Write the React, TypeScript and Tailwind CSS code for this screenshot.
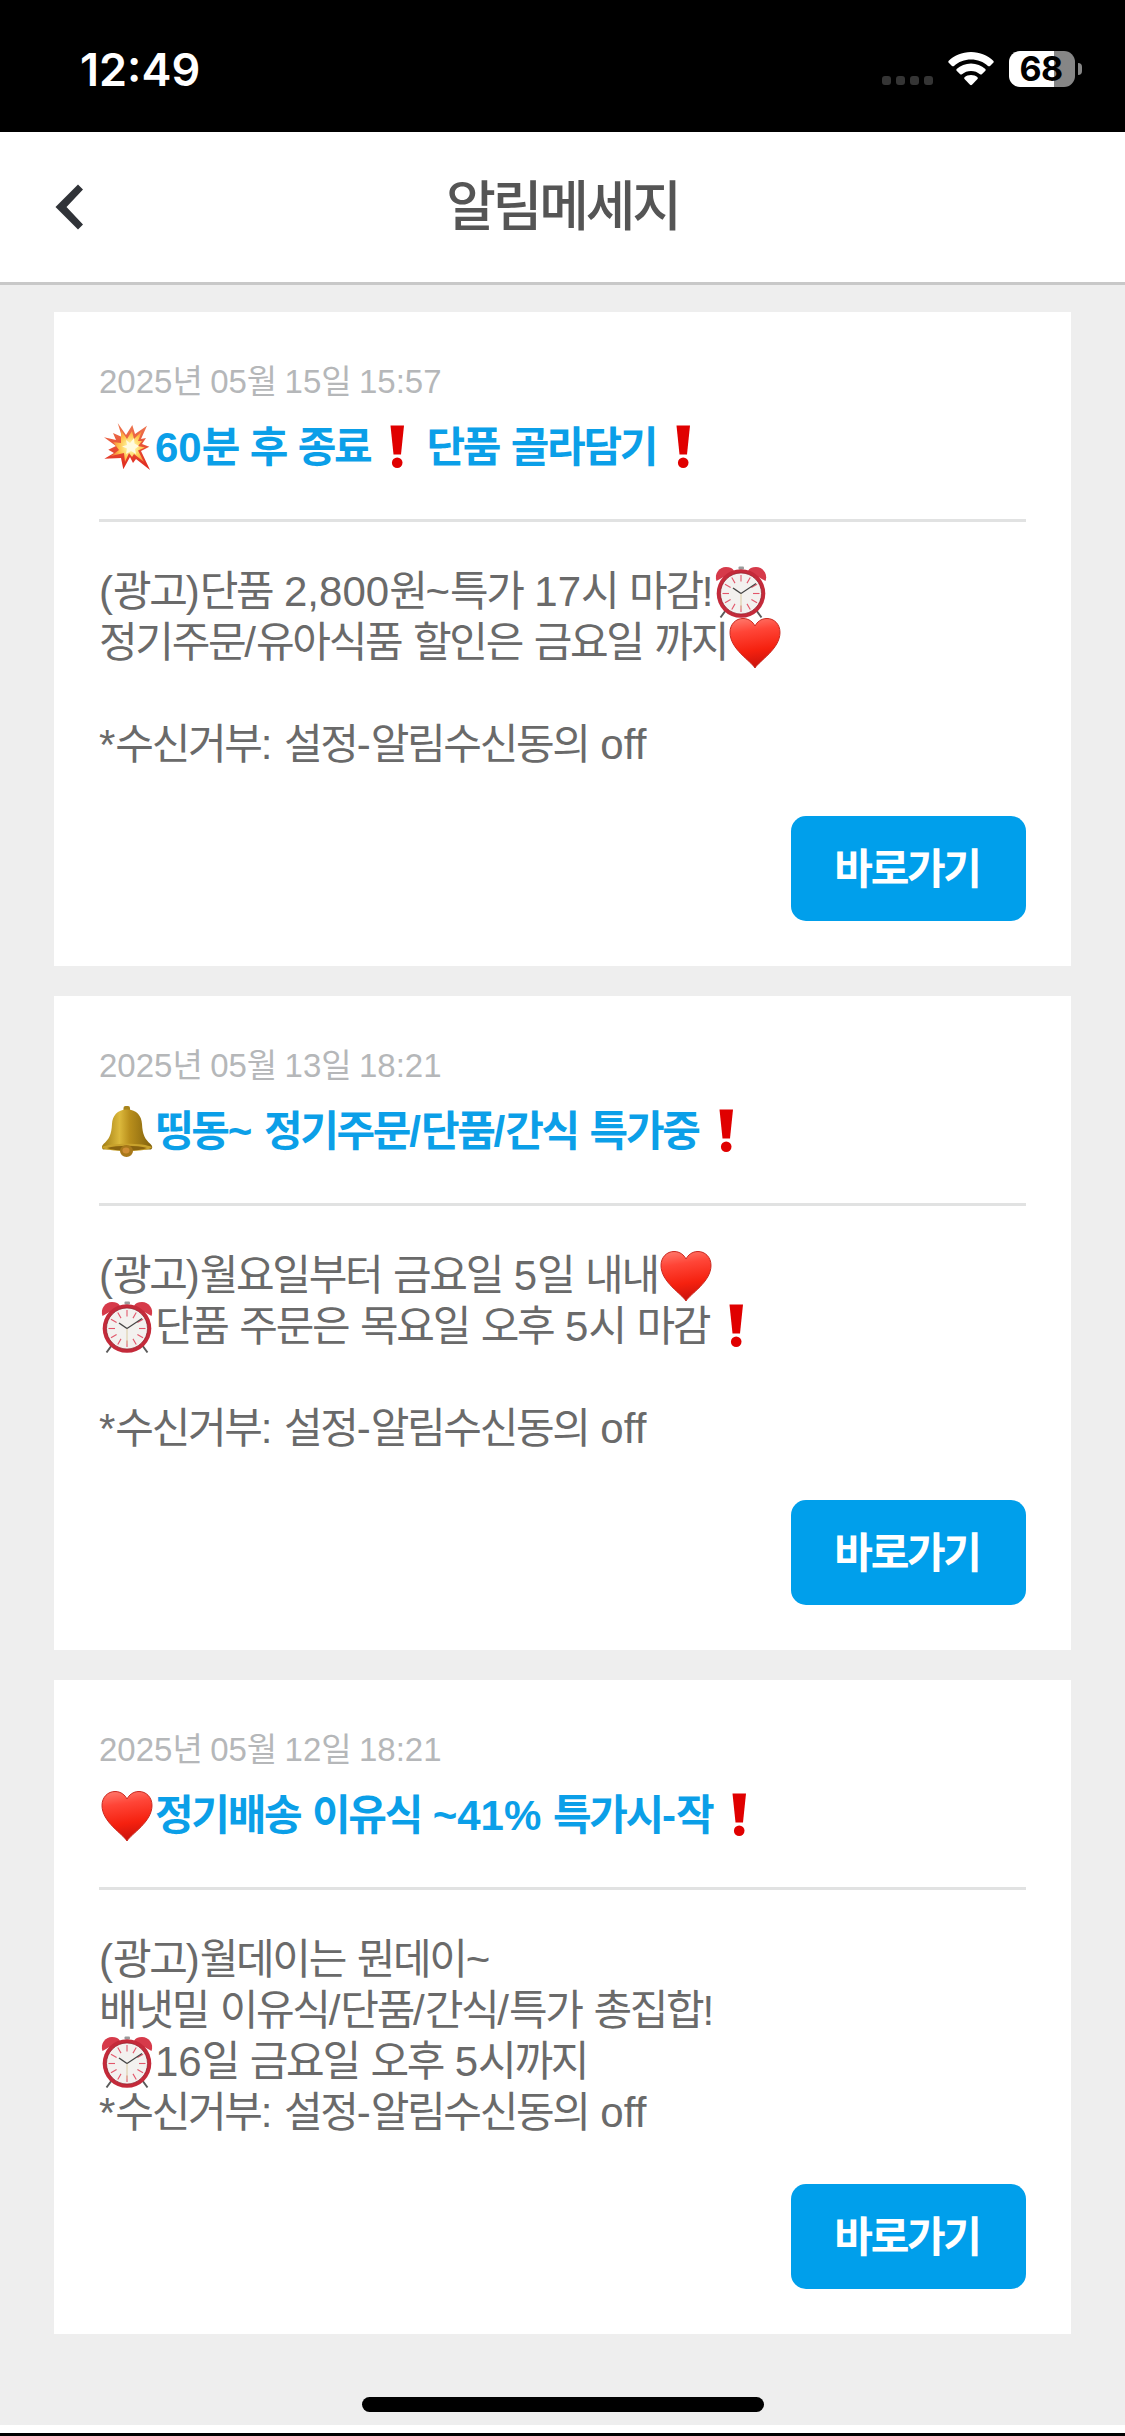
import React from 'react';

interface Message {
  id: number;
  date: string;
  title: string;
  body: string[];
}

const MESSAGES: Message[] = [
  {
    id: 1,
    date: '2025년 05월 15일 15:57',
    title: '💥60분 후 종료❗단품 골라담기❗',
    body: [
      '(광고)단품 2,800원~특가 17시 마감!⏰',
      '정기주문/유아식품 할인은 금요일 까지❤',
      '',
      '*수신거부: 설정-알림수신동의 off',
    ],
  },
  {
    id: 2,
    date: '2025년 05월 13일 18:21',
    title: '🔔띵동~ 정기주문/단품/간식 특가중❗',
    body: [
      '(광고)월요일부터 금요일 5일 내내❤',
      '⏰단품 주문은 목요일 오후 5시 마감❗',
      '',
      '*수신거부: 설정-알림수신동의 off',
    ],
  },
  {
    id: 3,
    date: '2025년 05월 12일 18:21',
    title: '❤정기배송 이유식 ~41% 특가시-작❗',
    body: [
      '(광고)월데이는 뭔데이~',
      '배냇밀 이유식/단품/간식/특가 총집합!',
      '⏰16일 금요일 오후 5시까지',
      '*수신거부: 설정-알림수신동의 off',
    ],
  },
];

const Heart = () => (
  <>
    <defs>
      <linearGradient id="heart" x1="0" y1="0" x2="0.15" y2="1">
        <stop offset="0" stopColor="#ff7d70" />
        <stop offset="0.3" stopColor="#ff4537" />
        <stop offset="0.7" stopColor="#f5210f" />
        <stop offset="1" stopColor="#cf140c" />
      </linearGradient>
    </defs>
    <path
      d="M28 53C24 46 3 34 3 17.500C3 9 9 3.500 16 3.500C22 3.500 26 7 28 11C30 7 34 3.500 40 3.500C47 3.500 53 9 53 17.500C53 34 32 46 28 53Z"
      fill="url(#heart)"
      stroke="#c9281f"
      strokeWidth="1"
    />
  </>
);

const Exclamation = () => (
  <>
    <path d="M20.500 5.500H34L31 34.500H23.500Z" fill="#e00000" />
    <circle cx="27.200" cy="42.800" r="5.300" fill="#e00000" />
  </>
);

const TICKS = [0, 30, 60, 90, 120, 150, 180, 210, 240, 270, 300, 330];

const AlarmClock = () => (
  <>
    <path d="M13 46L7.500 53.500M43 46L48.500 53.500" stroke="#5b5b5b" strokeWidth="2" />
    <rect x="25.500" y="2.500" width="5.500" height="3" rx="1" fill="#9a9a9a" />
    <path d="M3.500 17C1 10 6 3 13 3C17 3 20 4.500 21 7Z" fill="#d63a4a" />
    <path d="M52.500 17C55 10 50 3 43 3C39 3 36 4.500 35 7Z" fill="#d63a4a" />
    <circle cx="28" cy="29.500" r="24.300" fill="#c42a3a" />
    <circle cx="28" cy="29.500" r="20.500" fill="#f3f1ef" stroke="#8d1a27" strokeWidth="0.700" />
    {TICKS.map((deg) => (
      <path key={deg} d="M28 11V17.500" stroke="#e2566a" strokeWidth="1.100" transform={`rotate(${deg} 28 29.500)`} />
    ))}
    <path d="M28 29.500V45" stroke="#d8c79a" strokeWidth="0.900" />
    <path d="M28 29.500L20 24" stroke="#444" strokeWidth="1.500" />
    <path d="M28 29.500L43 19.500" stroke="#444" strokeWidth="1.100" />
  </>
);

const Bell = () => (
  <>
    <defs>
      <linearGradient id="bell" x1="0" x2="1">
        <stop offset="0" stopColor="#a07c14" />
        <stop offset="0.35" stopColor="#dcb93c" />
        <stop offset="0.55" stopColor="#b98f1c" />
        <stop offset="1" stopColor="#80600c" />
      </linearGradient>
    </defs>
    <rect x="24.500" y="2" width="6.500" height="6" rx="2" fill="#a8841c" />
    <path
      d="M28 5.500C18 5.500 13.500 12 13 20C12.500 31 10 35 4.500 40C2.500 42 2.500 44 4 45.500H52C54 44 53.500 42 51.500 40C46 35 43.500 31 43 20C42.500 12 38 5.500 28 5.500Z"
      fill="url(#bell)"
    />
    <path d="M3 43C11 38.500 45 38.500 53 43C51 48.500 5 48.500 3 43Z" fill="#c9a22c" />
    <path d="M8 44C18 41 38 41 48 44C40 47.500 16 47.500 8 44Z" fill="#8a6410" />
    <ellipse cx="27.500" cy="47" rx="6.500" ry="6" fill="#a8781a" />
    <ellipse cx="27" cy="46.500" rx="3.500" ry="3" fill="#cf8d35" />
  </>
);

const Collision = () => (
  <>
    <defs>
      <linearGradient id="flame" x1="0" y1="0" x2="0" y2="1">
        <stop offset="0" stopColor="#ee7a52" />
        <stop offset="1" stopColor="#e0261c" />
      </linearGradient>
      <radialGradient id="blast" gradientUnits="userSpaceOnUse" cx="32" cy="27" r="19">
        <stop offset="0" stopColor="#fffbe0" />
        <stop offset="0.3" stopColor="#ffe98a" />
        <stop offset="0.65" stopColor="#ffc24a" />
        <stop offset="1" stopColor="#f4813e" />
      </radialGradient>
    </defs>
    <path
      d="M18.700 3L27 15L33.300 5L36 14L48 5.700L42 19L47 18L43 24L50.300 26.700L42 31L51 50L37 39L34 43L31 37L24.300 49.300L22 38L5.300 38.700L15 33L9.300 29.700L17 26L5 17.300L17 20L14 13L23 17Z"
      fill="url(#flame)"
    />
    <path
      d="M22 10L28 19L33 11L35 19L43 11L39 21L43 21L39 26L46 27.500L39 30.500L45 42L35 34L33 37L30 33L26 42L25 33L12 36L20 30L14 22L22 23Z"
      fill="url(#blast)"
    />
    <path d="M27 20L31 23L35 18L35.500 23.500L40 26L36 29L37 34L32 31L27 34L28 28.500L23 26.500L28 25Z" fill="#fffbe0" />
  </>
);

const EMOJI: Record<string, React.FC> = {
  '❤': Heart,
  '❗': Exclamation,
  '⏰': AlarmClock,
  '🔔': Bell,
  '💥': Collision,
};

// Splits a line into Hangul runs, emoji and everything else
const RichText = ({ text }: { text: string }) => {
  const parts = text.split(/([가-힣]+|❤|❗|⏰|🔔|💥)/u).filter(Boolean);
  return (
    <>
      {parts.map((part, i) => {
        const Emoji = EMOJI[part];
        if (Emoji) {
          return (
            <svg key={i} viewBox="0 0 56 56" role="img" aria-label={part} className="inline-block size-14 -my-2 align-[-6px]">
              <Emoji />
            </svg>
          );
        }
        if (/[가-힣]/.test(part)) {
          return <span key={i} className="tracking-[-0.055em]">{part}</span>;
        }
        return <span key={i}>{part}</span>;
      })}
    </>
  );
};

const StatusBar = () => (
  <div className="flex h-[132px] items-center justify-between bg-black pl-[80px] pr-[43px] pt-[6px] text-white font-['Inter',sans-serif]">
    <span className="text-[45px] leading-none font-semibold">12:49</span>
    <div className="flex items-center">
      <div className="mt-[23px] mr-[15px] flex gap-[5px]">
        {[0, 1, 2, 3].map((n) => (
          <span key={n} className="size-[9px] rounded-[3px] bg-[#353535]" />
        ))}
      </div>
      <svg viewBox="0 0 46 34" className="mr-[15px] h-[34px] w-[46px]" fill="#fff">
        <path d="M23 0C32 0 40 3.500 45.500 9Q46 10 45.500 10.500L42 14Q41 14.500 40 14C35.500 9.800 29.500 7.500 23 7.500C16.500 7.500 10.500 9.800 6 14Q5 14.500 4 14L0.500 10.500Q0 10 0.500 9C6 3.500 14 0 23 0Z" />
        <path d="M23 11.500C28.500 11.500 33.500 13.600 37.400 17Q38 18 37.400 18.700L33.800 22.300Q33 22.900 32 22.300C29.600 20.200 26.500 19 23 19C19.500 19 16.400 20.200 14 22.300Q13 22.900 12.200 22.300L8.600 18.700Q8 18 8.600 17C12.500 13.600 17.500 11.500 23 11.500Z" />
        <path d="M23 23C25.500 23 27.800 23.900 29.500 25.300Q30.200 26.200 29.500 27L24 32.800Q23 33.600 22 32.800L16.500 27Q15.800 26.200 16.500 25.300C18.200 23.900 20.500 23 23 23Z" />
      </svg>
      <div className="flex h-[36px] w-[66px] items-center justify-center rounded-[11px] bg-linear-to-r from-white from-[68%] to-[#868686] to-[68%] pr-[2px] text-[34px] leading-none font-bold tracking-[-0.5px] text-black">
        68
      </div>
      <span className="ml-[3px] h-[12px] w-[4px] rounded-r-full bg-[#868686]" />
    </div>
  </div>
);

const Header = () => (
  <header className="grid h-[153px] grid-cols-[120px_1fr_120px] items-center border-b-[3px] border-[#c8c8c8] bg-white">
    <button aria-label="뒤로" className="pl-[55px]">
      <svg viewBox="0 0 28 46" className="h-[46px] w-[28px]">
        <path d="M23 0.500L28 5.500L11.500 23L28 40.500L23 45.500L0.500 23Z" fill="#303338" />
      </svg>
    </button>
    <h1 className="text-center text-[54px] leading-none font-medium tracking-[-0.058em] text-[#555]">알림메세지</h1>
  </header>
);

const MessageCard = ({ message }: { message: Message }) => (
  <article className="bg-white p-[45px]">
    <time className="block h-[48px] text-[33px] leading-[50px] text-[#b5b7b9]">
      <RichText text={message.date} />
    </time>
    <h2 className="mt-[15px] h-[54px] text-[42px] leading-[55px] font-bold text-[#0b9fe8]">
      <RichText text={message.title} />
    </h2>
    <div className="my-[45px] h-[3px] bg-[#e1e2e2]" />
    <div className="text-[42px] text-[#6a6a6a]">
      {message.body.map((line, i) => (
        <p key={i} className="h-[51px] leading-[49px] whitespace-nowrap">
          <RichText text={line} />
        </p>
      ))}
    </div>
    <div className="mt-[45px] flex justify-end">
      <button className="h-[105px] w-[235px] rounded-[15px] bg-[#009feb] pt-[3px] pr-[3px] text-[42px] leading-none font-bold tracking-[-0.055em] text-white">
        바로가기
      </button>
    </div>
  </article>
);

const App: React.FC = () => {
  return (
    <div className="flex h-[2436px] w-[1125px] flex-col overflow-hidden bg-[#eee] font-['Liberation_Sans','Noto_Sans_CJK_KR',sans-serif]">
      <StatusBar />
      <Header />
      <main className="flex flex-1 flex-col gap-[30px] px-[54px] pt-[27px]">
        {MESSAGES.map((message) => (
          <MessageCard key={message.id} message={message} />
        ))}
      </main>
      {/* Home indicator */}
      <div className="mb-[13px] h-[15px] w-[402px] self-center rounded-full bg-black" />
      <div className="h-[11px] shrink-0 border-b-[3px] border-black bg-white" />
    </div>
  );
};

export default App;
